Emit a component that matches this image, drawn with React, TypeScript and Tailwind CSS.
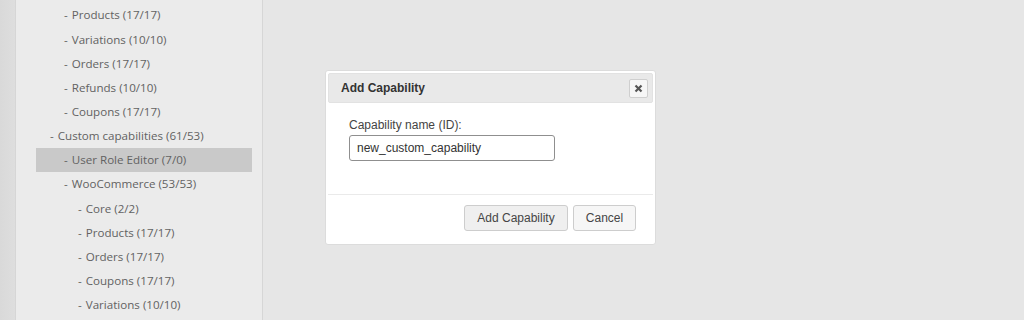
import { FC } from 'react'

interface Cap {
  label: string
  level: number
  active?: boolean
}

const caps: Cap[] = [
  { label: 'Products (17/17)', level: 2 },
  { label: 'Variations (10/10)', level: 2 },
  { label: 'Orders (17/17)', level: 2 },
  { label: 'Refunds (10/10)', level: 2 },
  { label: 'Coupons (17/17)', level: 2 },
  { label: 'Custom capabilities (61/53)', level: 1 },
  { label: 'User Role Editor (7/0)', level: 2, active: true },
  { label: 'WooCommerce (53/53)', level: 2 },
  { label: 'Core (2/2)', level: 3 },
  { label: 'Products (17/17)', level: 3 },
  { label: 'Orders (17/17)', level: 3 },
  { label: 'Coupons (17/17)', level: 3 },
  { label: 'Variations (10/10)', level: 3 },
]

const indent: Record<number, string> = {
  1: 'pl-[14px]',
  2: 'pl-[28px]',
  3: 'pl-[42px]',
}

const Sidebar: FC = () => (
  <div className="w-[248px] shrink-0 border-l border-r border-[#d6d6d6] bg-[#ebebeb] pt-[3px] font-['Open_Sans',sans-serif] text-[11.6px] text-[#626262]">
    <ul className="ml-[20px] mr-[10px]">
      {caps.map((c, i) => (
        <li
          key={i}
          className={`flex h-[24.17px] items-center whitespace-nowrap ${indent[c.level]} ${
            c.active ? 'bg-[#c9c9c9]' : ''
          }`}
        >
          <span className="mr-[4px]">-</span>
          <span>{c.label}</span>
        </li>
      ))}
    </ul>
  </div>
)

const Dialog: FC = () => (
  <div className="w-[331px] rounded-[3px] border border-[#dcdcdc] bg-white p-[2px] font-['Liberation_Sans',Arial,sans-serif] text-[12px] text-[#333]">
    <div className="flex h-[30px] items-center justify-between rounded-[2px] border border-[#e2e2e2] bg-[#e9e9e9] pl-[12px] pr-[4px]">
      <span className="font-bold text-[#333]">Add Capability</span>
      <button className="flex h-[19px] w-[19px] items-center justify-center rounded-[2px] border border-[#cfcfcf] bg-[#f6f6f6]">
        <svg width="9" height="9" viewBox="0 0 9 9">
          <path d="M1.5 1.5 L7.5 7.5 M7.5 1.5 L1.5 7.5" stroke="#555" strokeWidth="2.2" />
        </svg>
      </button>
    </div>
    <div className="px-[21px] pt-[13px] pb-[33px]">
      <div className="text-[#444]">Capability name (ID):</div>
      <div className="mt-[1px] flex h-[26px] w-[206px] items-center rounded-[3px] border border-[#8f8f8f] px-[7px] text-[#333]">
        new_custom_capability
      </div>
    </div>
    <div className="flex justify-end gap-[5px] border-t border-[#eaeaea] pr-[17px] pt-[10px] pb-[11px]">
      <button className="h-[26px] w-[104px] rounded-[3px] border border-[#cdcdcd] bg-[#efefef] text-[#454545]">
        Add Capability
      </button>
      <button className="h-[26px] w-[63px] rounded-[3px] border border-[#cdcdcd] bg-[#f6f6f6] text-[#454545]">
        Cancel
      </button>
    </div>
  </div>
)

const App: FC = () => (
  <div className="flex h-[320px] w-[1024px] overflow-hidden bg-[#e6e6e6]">
    <div className="w-[15px] shrink-0 bg-gradient-to-r from-[#d9d9d9] to-[#dedede]" />
    <Sidebar />
    <div className="flex-1 pl-[62px] pt-[70px]">
      <Dialog />
    </div>
  </div>
)

export default App
